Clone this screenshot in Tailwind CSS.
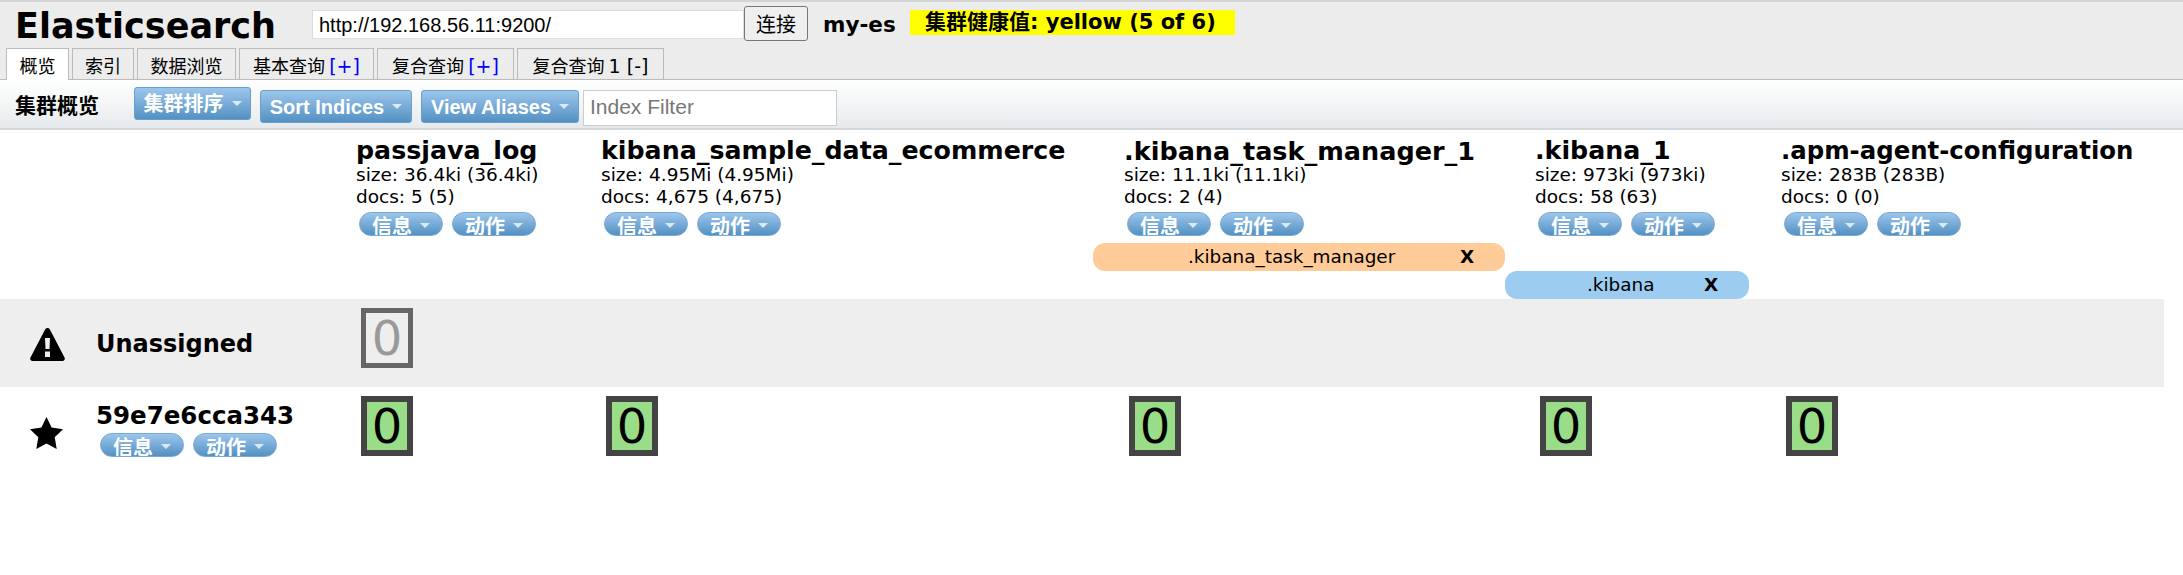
<!DOCTYPE html>
<html lang="zh">
<head>
  <meta charset="UTF-8" />
  <title>Elasticsearch</title>
  <script src="https://cdn.jsdelivr.net/npm/@tailwindcss/browser@4"></script>
</head>
<body class="bg-white text-black font-['DejaVu_Sans','Noto_Sans_CJK_SC',sans-serif]">
  <!-- header -->
  <div class="h-[80px] bg-[#ececec] border-t-2 border-[#d4d4d4] relative">
    <div class="flex items-start h-[46px]">
      <h1 class="ml-[15px] mt-[5px] w-[297px] text-[35px] leading-[38px] font-bold">Elasticsearch</h1>
      <input class="mt-[8px] w-[432px] h-[29px] bg-white border border-[#ddd] px-[6px] text-[20px] font-['Liberation_Sans','Noto_Sans_CJK_SC',sans-serif]" value="http://192.168.56.11:9200/" />
      <button class="mt-[4px] w-[64px] h-[35px] bg-[#efefef] border border-[#767676] rounded-[3px] text-[20px] leading-none font-['Noto_Sans_CJK_SC',sans-serif]">连接</button>
      <span class="ml-[15px] mt-[11px] w-[72px] text-[21.500px] leading-[24px] font-bold whitespace-nowrap">my-es</span>
      <span class="ml-[15px] mt-[8px] w-[325px] h-[25px] pl-[15px] bg-[#ffff00] text-[21px] leading-[25px] font-bold whitespace-nowrap">集群健康值: yellow (5 of 6)</span>
    </div>
    <div class="flex items-end h-[32px] pl-[6px] gap-[3px] text-[18px] leading-[32px] font-['Noto_Sans_CJK_SC',sans-serif] absolute top-[46px] left-0 right-0 border-b border-[#bbb]">
      <div class="w-[63px] h-[32px] -mb-px bg-white border border-b-0 border-[#bbb] text-center">概览</div>
      <div class="w-[62px] h-[31px] bg-[#ececec] border border-b-0 border-[#bbb] text-center">索引</div>
      <div class="w-[99px] h-[31px] bg-[#ececec] border border-b-0 border-[#bbb] text-center">数据浏览</div>
      <div class="w-[135px] h-[31px] bg-[#ececec] border border-b-0 border-[#bbb] text-center">基本查询 <span class="text-[#0000ff] text-[19px] font-['DejaVu_Sans']">[+]</span></div>
      <div class="w-[137px] h-[31px] bg-[#ececec] border border-b-0 border-[#bbb] text-center">复合查询 <span class="text-[#0000ff] text-[19px] font-['DejaVu_Sans']">[+]</span></div>
      <div class="w-[147px] h-[31px] bg-[#ececec] border border-b-0 border-[#bbb] text-center">复合查询 <span class="text-[19px] font-['DejaVu_Sans']">1 [-]</span></div>
    </div>
  </div>

  <!-- toolbar -->
  <div class="h-[50px] flex items-start bg-gradient-to-b from-white to-[#e7eaed] border-b-2 border-[#d5d8db]">
    <span class="ml-[15px] mt-[13px] w-[119px] text-[21px] leading-[26px] font-bold">集群概览</span>
    <button class="mt-[7px] w-[117px] h-[33px] flex items-center justify-center gap-[8px] rounded-[3px] border border-[#6a9fcc] bg-gradient-to-b from-[#9cc6ec] to-[#5391c3] text-white text-[20px] font-bold">集群排序<i class="w-0 h-0 border-x-[5px] border-t-[5px] border-x-transparent border-t-[#dbe9f5]"></i></button>
    <button class="ml-[9px] mt-[10px] w-[152px] h-[33px] flex items-center justify-center gap-[8px] rounded-[3px] border border-[#6a9fcc] bg-gradient-to-b from-[#9cc6ec] to-[#5391c3] text-white text-[20px] font-bold font-['Liberation_Sans',sans-serif]">Sort Indices<i class="w-0 h-0 border-x-[5px] border-t-[5px] border-x-transparent border-t-[#dbe9f5]"></i></button>
    <button class="ml-[9px] mt-[10px] w-[158px] h-[33px] flex items-center justify-center gap-[8px] rounded-[3px] border border-[#6a9fcc] bg-gradient-to-b from-[#9cc6ec] to-[#5391c3] text-white text-[20px] font-bold font-['Liberation_Sans',sans-serif]">View Aliases<i class="w-0 h-0 border-x-[5px] border-t-[5px] border-x-transparent border-t-[#dbe9f5]"></i></button>
    <input class="ml-[4px] mt-[10px] w-[254px] h-[36px] bg-white border border-[#ccc] px-[6px] pb-[3px] text-[21px] placeholder:text-[#777] font-['Liberation_Sans',sans-serif]" placeholder="Index Filter" />
  </div>

  <!-- index columns -->
  <div id="indices" class="grid grid-cols-[352px_245px_523px_411px_246px_387px] w-[2164px] h-[113px] pt-[7px]"></div>

  <!-- alias rows -->
  <div class="h-[28px] pl-[1093px]">
    <div class="w-[412px] h-[28px] relative rounded-[12px] bg-[#ffcc99] text-[18.400px] leading-[28px]">
      <span class="absolute left-[95px]">.kibana_task_manager</span>
      <span class="absolute left-[367px] font-bold">X</span>
    </div>
  </div>
  <div class="h-[28px] pl-[1505px]">
    <div class="w-[244px] h-[28px] relative rounded-[12px] bg-[#9ccdf0] text-[18.400px] leading-[28px]">
      <span class="absolute left-[82px]">.kibana</span>
      <span class="absolute left-[199px] font-bold">X</span>
    </div>
  </div>

  <!-- unassigned -->
  <div class="grid grid-cols-[352px_245px_523px_411px_246px_387px] w-[2164px] h-[88px] bg-[#eeeeee]">
    <div class="flex items-start">
      <svg class="ml-[30px] mt-[29px] w-[35px] h-[33px]" viewBox="0 0 35 33"><path fill-rule="evenodd" d="M17.5 0c1 0 1.8.5 2.4 1.5l14.6 28c.9 1.8-.1 3.5-2 3.5H2.500c-1.900 0-2.900-1.700-2-3.500l14.600-28C15.700.5 16.500 0 17.500 0zM15 10l.5 11h4l.5-11h-5zM15 23.500v5.500h5v-5.500h-5z"/></svg>
      <span class="ml-[31px] mt-[30px] text-[24px] leading-[30px] font-bold">Unassigned</span>
    </div>
    <div class="pt-[9px] pl-[9px]">
      <div class="w-[52px] h-[60px] border-[5px] border-[#666] text-[#999] text-center text-[48px] leading-[50px]">0</div>
    </div>
  </div>

  <!-- node -->
  <div id="node" class="grid grid-cols-[352px_245px_523px_411px_246px_387px] w-[2164px]">
    <div class="flex items-start">
      <svg class="ml-[30px] mt-[30px] w-[33px] h-[32px]" viewBox="0 0 33 32"><path d="M16.500 0l5.100 10.500 11.400 1.700-8.300 8.100 2 11.700-10.200-5.500-10.200 5.500 2-11.700L0 12.200l11.400-1.700z"/></svg>
      <div class="ml-[33px] mt-[14px]">
        <div class="text-[24.500px] leading-[30px] font-bold">59e7e6cca343</div>
        <div class="flex gap-[9px] ml-[4px] mt-[2px]" data-pills></div>
      </div>
    </div>
  </div>

  <script>
    const indices = [
      { name: 'passjava_log', size: '36.4ki (36.4ki)', docs: '5 (5)', title: 'text-[25.300px]' },
      { name: 'kibana_sample_data_ecommerce', size: '4.95Mi (4.95Mi)', docs: '4,675 (4,675)', title: 'text-[25.300px]' },
      { name: '.kibana_task_manager_1', size: '11.1ki (11.1ki)', docs: '2 (4)', title: 'text-[25.500px]' },
      { name: '.kibana_1', size: '973ki (973ki)', docs: '58 (63)', title: 'text-[25.300px]' },
      { name: '.apm-agent-configuration', size: '283B (283B)', docs: '0 (0)', title: 'text-[24.400px]' }
    ];

    function pill(label) {
      return `<div class="w-[84px] h-[24px] overflow-hidden rounded-[12px] border border-[#7aa9d2] bg-gradient-to-b from-[#9cc6ec] to-[#5391c3] text-white text-[20px] leading-[28px] font-bold flex justify-center gap-[8px] whitespace-nowrap"><span>${label}</span><i class="w-0 h-0 mt-[10px] border-x-[5px] border-t-[5px] border-x-transparent border-t-[#dbe9f5]"></i></div>`;
    }

    const pills = pill('信息') + pill('动作');

    document.getElementById('indices').innerHTML = '<div></div>' + indices.map(i => `
      <div class="pl-[4px] whitespace-nowrap">
        <div class="${i.title} leading-[28px] font-bold">${i.name}</div>
        <div class="text-[18.500px] leading-[22px] -mt-[1px]">size: ${i.size}</div>
        <div class="text-[18.500px] leading-[22px]">docs: ${i.docs}</div>
        <div class="flex gap-[9px] mt-[4px] ml-[3px]">${pills}</div>
      </div>`).join('');

    document.querySelector('[data-pills]').innerHTML = pills;

    document.getElementById('node').innerHTML += indices.map(i => `
      <div class="pt-[9px] ml-[9px]">
        <div class="w-[52px] h-[60px] border-[6px] border-[#444] bg-[#99dd88] text-center text-[48px] leading-[48px]">0</div>
      </div>`).join('');
  </script>
</body>
</html>
